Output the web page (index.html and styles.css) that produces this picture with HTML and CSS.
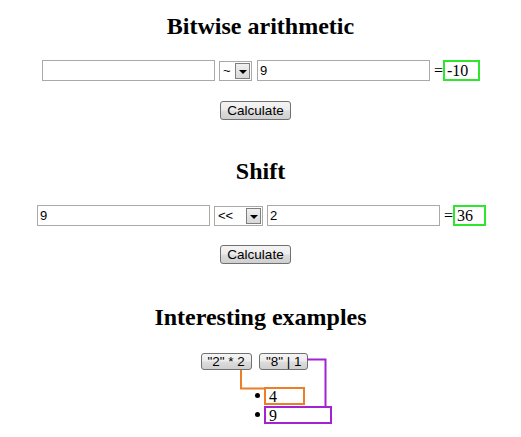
FILE: index.html
```html
<!DOCTYPE html>
<html>
<head>
<meta charset="utf-8">
<title>Bitwise</title>
<link rel="stylesheet" href="styles.css">
</head>
<body>
<div class="page">
  <h2 class="title">Bitwise arithmetic</h2>
  <div class="row row-bitwise">
    <div class="field"></div>
    <div class="select sel-narrow"><span class="sel-text">~</span><span class="sel-arrow"></span></div>
    <div class="field">9</div>
    <span class="eq">=</span>
    <span class="out out-wide">-10</span>
  </div>
  <div class="btnrow"><button class="btn">Calculate</button></div>

  <h2 class="title title-gap">Shift</h2>
  <div class="row row-shift">
    <div class="field">9</div>
    <div class="select sel-wide"><span class="sel-text">&lt;&lt;</span><span class="sel-arrow"></span></div>
    <div class="field">2</div>
    <span class="eq">=</span>
    <span class="out">36</span>
  </div>
  <div class="btnrow btnrow-2"><button class="btn">Calculate</button></div>

  <h2 class="title title-gap2">Interesting examples</h2>
  <div class="examples">
    <button class="btn btn-small">"2" * 2</button>
    <button class="btn btn-small">"8" | 1</button>
  </div>
  <ul class="results">
    <li><span class="dot"></span><span class="res res-orange">4</span></li>
    <li><span class="dot"></span><span class="res res-purple">9</span></li>
  </ul>

  <svg class="links" width="521" height="437" viewBox="0 0 521 437">
    <polyline points="241,370 241,388.5 264,388.5" fill="none" stroke="#ee7d28" stroke-width="2"/>
    <polyline points="307,359.5 325.5,359.5 325.5,406" fill="none" stroke="#a323d2" stroke-width="2"/>
  </svg>
</div>
</body>
</html>
```
FILE: styles.css
```css
body {
  margin: 0;
  font-family: "Liberation Serif", "Times New Roman", serif;
  font-size: 16px;
  color: #000;
  background: #fff;
}

.page {
  position: relative;
  width: 521px;
  height: 437px;
  padding-top: 12px;
  box-sizing: border-box;
  overflow: hidden;
}

.title {
  margin: 0;
  font-size: 24px;
  line-height: 28px;
  font-weight: bold;
  text-align: center;
}

.title-gap { margin-top: 37px; }
.title-gap2 { margin-top: 39px; }

.row {
  display: flex;
  align-items: center;
  margin-top: 20px;
  height: 21px;
}

.row-bitwise { padding-left: 42px; }
.row-shift { padding-left: 37px; }

.field {
  width: 173px;
  height: 21px;
  box-sizing: border-box;
  border: 1px solid #a9a9a9;
  font-family: "Liberation Sans", Arial, sans-serif;
  font-size: 13px;
  line-height: 19px;
  padding-left: 2px;
  background: #fff;
}

.select {
  display: flex;
  align-items: center;
  justify-content: space-between;
  height: 20px;
  box-sizing: border-box;
  border: 1px solid #a9a9a9;
  margin: 0 4px;
  padding: 1px;
  font-family: "Liberation Sans", Arial, sans-serif;
  font-size: 13px;
}

.sel-narrow { width: 33px; margin-right: 5px; }
.sel-wide { width: 49px; }

.sel-text {
  padding-left: 2px;
  line-height: 16px;
}

.sel-arrow {
  width: 15px;
  height: 16px;
  box-sizing: border-box;
  border: 1px solid #7f7f7f;
  background: linear-gradient(#f0f0f0, #d8d8d8);
  position: relative;
}

.sel-arrow::after {
  content: "";
  position: absolute;
  left: 3px;
  top: 6px;
  border-left: 4px solid transparent;
  border-right: 4px solid transparent;
  border-top: 4px solid #000;
}

.eq {
  padding-left: 4px;
  width: 9px;
  line-height: 21px;
}

.out {
  display: inline-block;
  height: 21px;
  box-sizing: border-box;
  border: 2px solid #2fe62f;
  padding: 0 11px 0 2px;
  line-height: 17px;
  font-family: "Liberation Serif", "Times New Roman", serif;
}

.out-wide { padding-right: 10px; }

.btnrow {
  display: flex;
  justify-content: center;
  margin-top: 20px;
  padding-right: 10px;
}

.btnrow-2 { margin-top: 19px; }

.btn {
  height: 19px;
  box-sizing: border-box;
  border: 1px solid #707070;
  border-radius: 3px;
  background: linear-gradient(#f4f4f4 0%, #ececec 48%, #dddddd 52%, #cfcfcf 100%);
  font-family: "Liberation Sans", Arial, sans-serif;
  font-size: 13.5px;
  line-height: 15px;
  padding: 0 6px;
  color: #000;
  margin: 0;
}

.examples {
  display: flex;
  justify-content: center;
  gap: 7px;
  margin-top: 22px;
  padding-right: 12px;
}

.btn-small {
  height: 17px;
  line-height: 14px;
}

.results {
  list-style: none;
  margin: 16px 0 0 255px;
  padding: 0;
}

.results li {
  display: flex;
  align-items: center;
  height: 19px;
}

.dot {
  width: 5px;
  height: 5px;
  border-radius: 50%;
  background: #000;
  margin-right: 4px;
}

.res {
  display: inline-block;
  height: 18px;
  box-sizing: border-box;
  border: 2px solid;
  padding-left: 3px;
  line-height: 15px;
  font-family: "Liberation Serif", "Times New Roman", serif;
}

.res-orange { width: 41px; border-color: #ee7d28; }
.res-purple { width: 68px; border-color: #a323d2; }

.links {
  position: absolute;
  left: 0;
  top: 0;
  pointer-events: none;
}
```
